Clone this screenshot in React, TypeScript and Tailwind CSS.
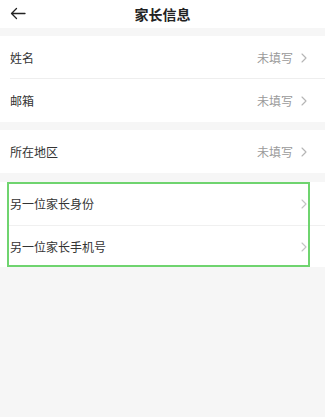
import React from "react";

const font = { fontFamily: '"Noto Sans CJK SC", "Noto Sans", sans-serif' };

function Chevron({ color = "#b5b5b5" }: { color?: string }) {
  return (
    <svg width="6" height="10" viewBox="0 0 6 10" fill="none" className="shrink-0">
      <path d="M1 1l4 4-4 4" stroke={color} strokeWidth="1.1" strokeLinecap="round" strokeLinejoin="round" />
    </svg>
  );
}

function Row({ label, value, divider }: { label: string; value?: string; divider?: boolean }) {
  return (
    <div className="relative flex h-[43px] items-center pl-[10px] pr-[18px]">
      <span className="flex-1 text-[12px] text-[#333]">{label}</span>
      {value ? <span className="mr-[8px] text-[12px] text-[#9a9a9a]">{value}</span> : null}
      <Chevron />
      {divider ? <div className="absolute bottom-0 left-[10px] right-0 h-px bg-[#eeeeee]" /> : null}
    </div>
  );
}

export default function App() {
  return (
    <div className="min-h-[417px] w-[325px] bg-[#f6f6f6]" style={font}>
      <div className="relative flex h-[28px] items-center justify-center bg-white">
        <svg className="absolute left-[10px] top-[7px]" width="16" height="13" viewBox="0 0 16 13" fill="none">
          <path d="M15 6.5H1.5M6.5 1.5L1.5 6.5l5 5" stroke="#222" strokeWidth="1.3" strokeLinecap="round" strokeLinejoin="round" />
        </svg>
        <span className="text-[14px] font-bold text-[#222]">家长信息</span>
      </div>

      <div className="mt-[8px] bg-white">
        <Row label="姓名" value="未填写" divider />
        <Row label="邮箱" value="未填写" />
      </div>

      <div className="mt-[8px] bg-white">
        <Row label="所在地区" value="未填写" />
      </div>

      <div className="relative mt-[9px] bg-white">
        <div className="relative flex h-[44px] items-center pl-[10px] pr-[18px]">
          <span className="flex-1 text-[12px] text-[#333]">另一位家长身份</span>
          <Chevron color="#c4c4c4" />
          <div className="absolute bottom-0 left-[7px] right-0 h-px bg-[#f0f0f0]" />
        </div>
        <div className="flex h-[41px] items-center pl-[10px] pr-[18px]">
          <span className="flex-1 text-[12px] text-[#333]">另一位家长手机号</span>
          <Chevron color="#c4c4c4" />
        </div>
        <div className="pointer-events-none absolute bottom-0 left-[7px] top-0 w-[303px] border-2 border-[#6fd46f]" />
      </div>
    </div>
  );
}
